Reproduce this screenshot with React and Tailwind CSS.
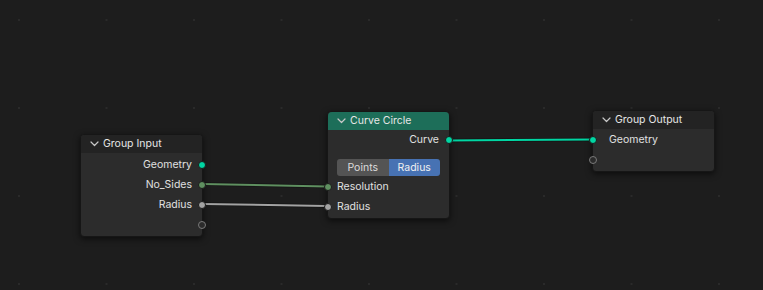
import React from "react";

const FONT = { fontFamily: "Inter, 'Noto Sans', 'DejaVu Sans', sans-serif" };

function Chevron() {
  return (
    <svg width="9" height="6" viewBox="0 0 9 6" className="shrink-0">
      <path d="M1 1 L4.5 4.5 L8 1" fill="none" stroke="#c8c8c8" strokeWidth="1.2" strokeLinecap="round" strokeLinejoin="round" />
    </svg>
  );
}

function Socket({ color, hollow, side }) {
  const pos = side === "right" ? "right-[-4px]" : "left-[-4px]";
  if (hollow) {
    return <span className={`absolute ${pos} top-1/2 -translate-y-1/2 w-[8px] h-[8px] rounded-full border border-[#7a7a7a] bg-[#2b2b2b]`} />;
  }
  return (
    <span
      className={`absolute ${pos} top-1/2 -translate-y-1/2 w-[8px] h-[8px] rounded-full border border-[#1a1a1a]`}
      style={{ backgroundColor: color }}
    />
  );
}

function Header({ title, green }) {
  return (
    <div
      className={`h-[18px] flex items-center gap-[4px] pl-[9px] rounded-t-[4px] text-[10.5px] text-[#e6e6e6] ${
        green ? "bg-[#1d6e59]" : "bg-[#232323]"
      }`}
    >
      <Chevron />
      <span className="leading-none">{title}</span>
    </div>
  );
}

export default function App() {
  return (
    <div className="relative w-[763px] h-[290px] overflow-hidden bg-[#1d1d1d]" style={FONT}>
      {/* grid dots */}
      <svg className="absolute inset-0" width="763" height="290">
        {[20, 108, 196, 284].map((y) =>
          [19, 106.5, 194, 281.5, 369, 456.5, 544, 631.5, 719].map((x) => (
            <rect key={`${x}-${y}`} x={x - 1} y={y - 1} width="2" height="2" fill="#2a2a2a" />
          ))
        )}
      </svg>

      {/* links */}
      <svg className="absolute inset-0" width="763" height="290">
        <line x1="449" y1="140.5" x2="592" y2="139.5" stroke="#141414" strokeWidth="3.5" />
        <line x1="449" y1="140.5" x2="592" y2="139.5" stroke="#00d6a3" strokeWidth="2" />
        <line x1="202" y1="184" x2="327" y2="186.5" stroke="#141414" strokeWidth="3.5" />
        <line x1="202" y1="184" x2="327" y2="186.5" stroke="#5f9060" strokeWidth="2" />
        <line x1="202" y1="204" x2="327" y2="206" stroke="#141414" strokeWidth="3.5" />
        <line x1="202" y1="204" x2="327" y2="206" stroke="#a3a3a3" strokeWidth="2" />
      </svg>

      {/* Group Input */}
      <div className="absolute left-[80px] top-[134px] w-[123px] h-[103px] rounded-[4px] bg-[#2c2c2c] border border-[#161616] shadow-[0_2px_6px_rgba(0,0,0,0.6)] flex flex-col">
        <Header title="Group Input" />
        <div className="flex flex-col pt-[2px] text-[10.5px] text-[#e0e0e0]">
          <div className="relative h-[20px] flex items-center justify-end pr-[10px]">
            Geometry
            <Socket color="#00d6a3" side="right" />
          </div>
          <div className="relative h-[20px] flex items-center justify-end pr-[10px]">
            No_Sides
            <Socket color="#5f9060" side="right" />
          </div>
          <div className="relative h-[20px] flex items-center justify-end pr-[10px]">
            Radius
            <Socket color="#a3a3a3" side="right" />
          </div>
          <div className="relative h-[19px]">
            <Socket hollow side="right" />
          </div>
        </div>
      </div>

      {/* Curve Circle */}
      <div className="absolute left-[327px] top-[111px] w-[123px] h-[108px] rounded-[4px] bg-[#2c2c2c] border border-[#161616] shadow-[0_2px_6px_rgba(0,0,0,0.6)] flex flex-col">
        <Header title="Curve Circle" green />
        <div className="flex flex-col text-[10.5px] text-[#e0e0e0]">
          <div className="relative h-[20px] flex items-center justify-end pr-[10px]">
            Curve
            <Socket color="#00d6a3" side="right" />
          </div>
          <div className="h-[9px]" />
          <div className="mx-[9px] h-[17px] flex rounded-[3px] overflow-hidden">
            <div className="flex-1 flex items-center justify-center bg-[#545454] text-[#dcdcdc]">Points</div>
            <div className="flex-1 flex items-center justify-center bg-[#4772b3] text-[#f0f0f0]">Radius</div>
          </div>
          <div className="h-[1px]" />
          <div className="relative h-[20px] flex items-center pl-[9px]">
            Resolution
            <Socket color="#5f9060" side="left" />
          </div>
          <div className="relative h-[20px] flex items-center pl-[9px]">
            Radius
            <Socket color="#a3a3a3" side="left" />
          </div>
        </div>
      </div>

      {/* Group Output */}
      <div className="absolute left-[592px] top-[110px] w-[123px] h-[62px] rounded-[4px] bg-[#2c2c2c] border border-[#161616] shadow-[0_2px_6px_rgba(0,0,0,0.6)] flex flex-col">
        <Header title="Group Output" />
        <div className="flex flex-col pt-[1px] text-[10.5px] text-[#e0e0e0]">
          <div className="relative h-[20px] flex items-center pl-[16px]">
            Geometry
            <Socket color="#00d6a3" side="left" />
          </div>
          <div className="relative h-[19px]">
            <Socket hollow side="left" />
          </div>
        </div>
      </div>
    </div>
  );
}
